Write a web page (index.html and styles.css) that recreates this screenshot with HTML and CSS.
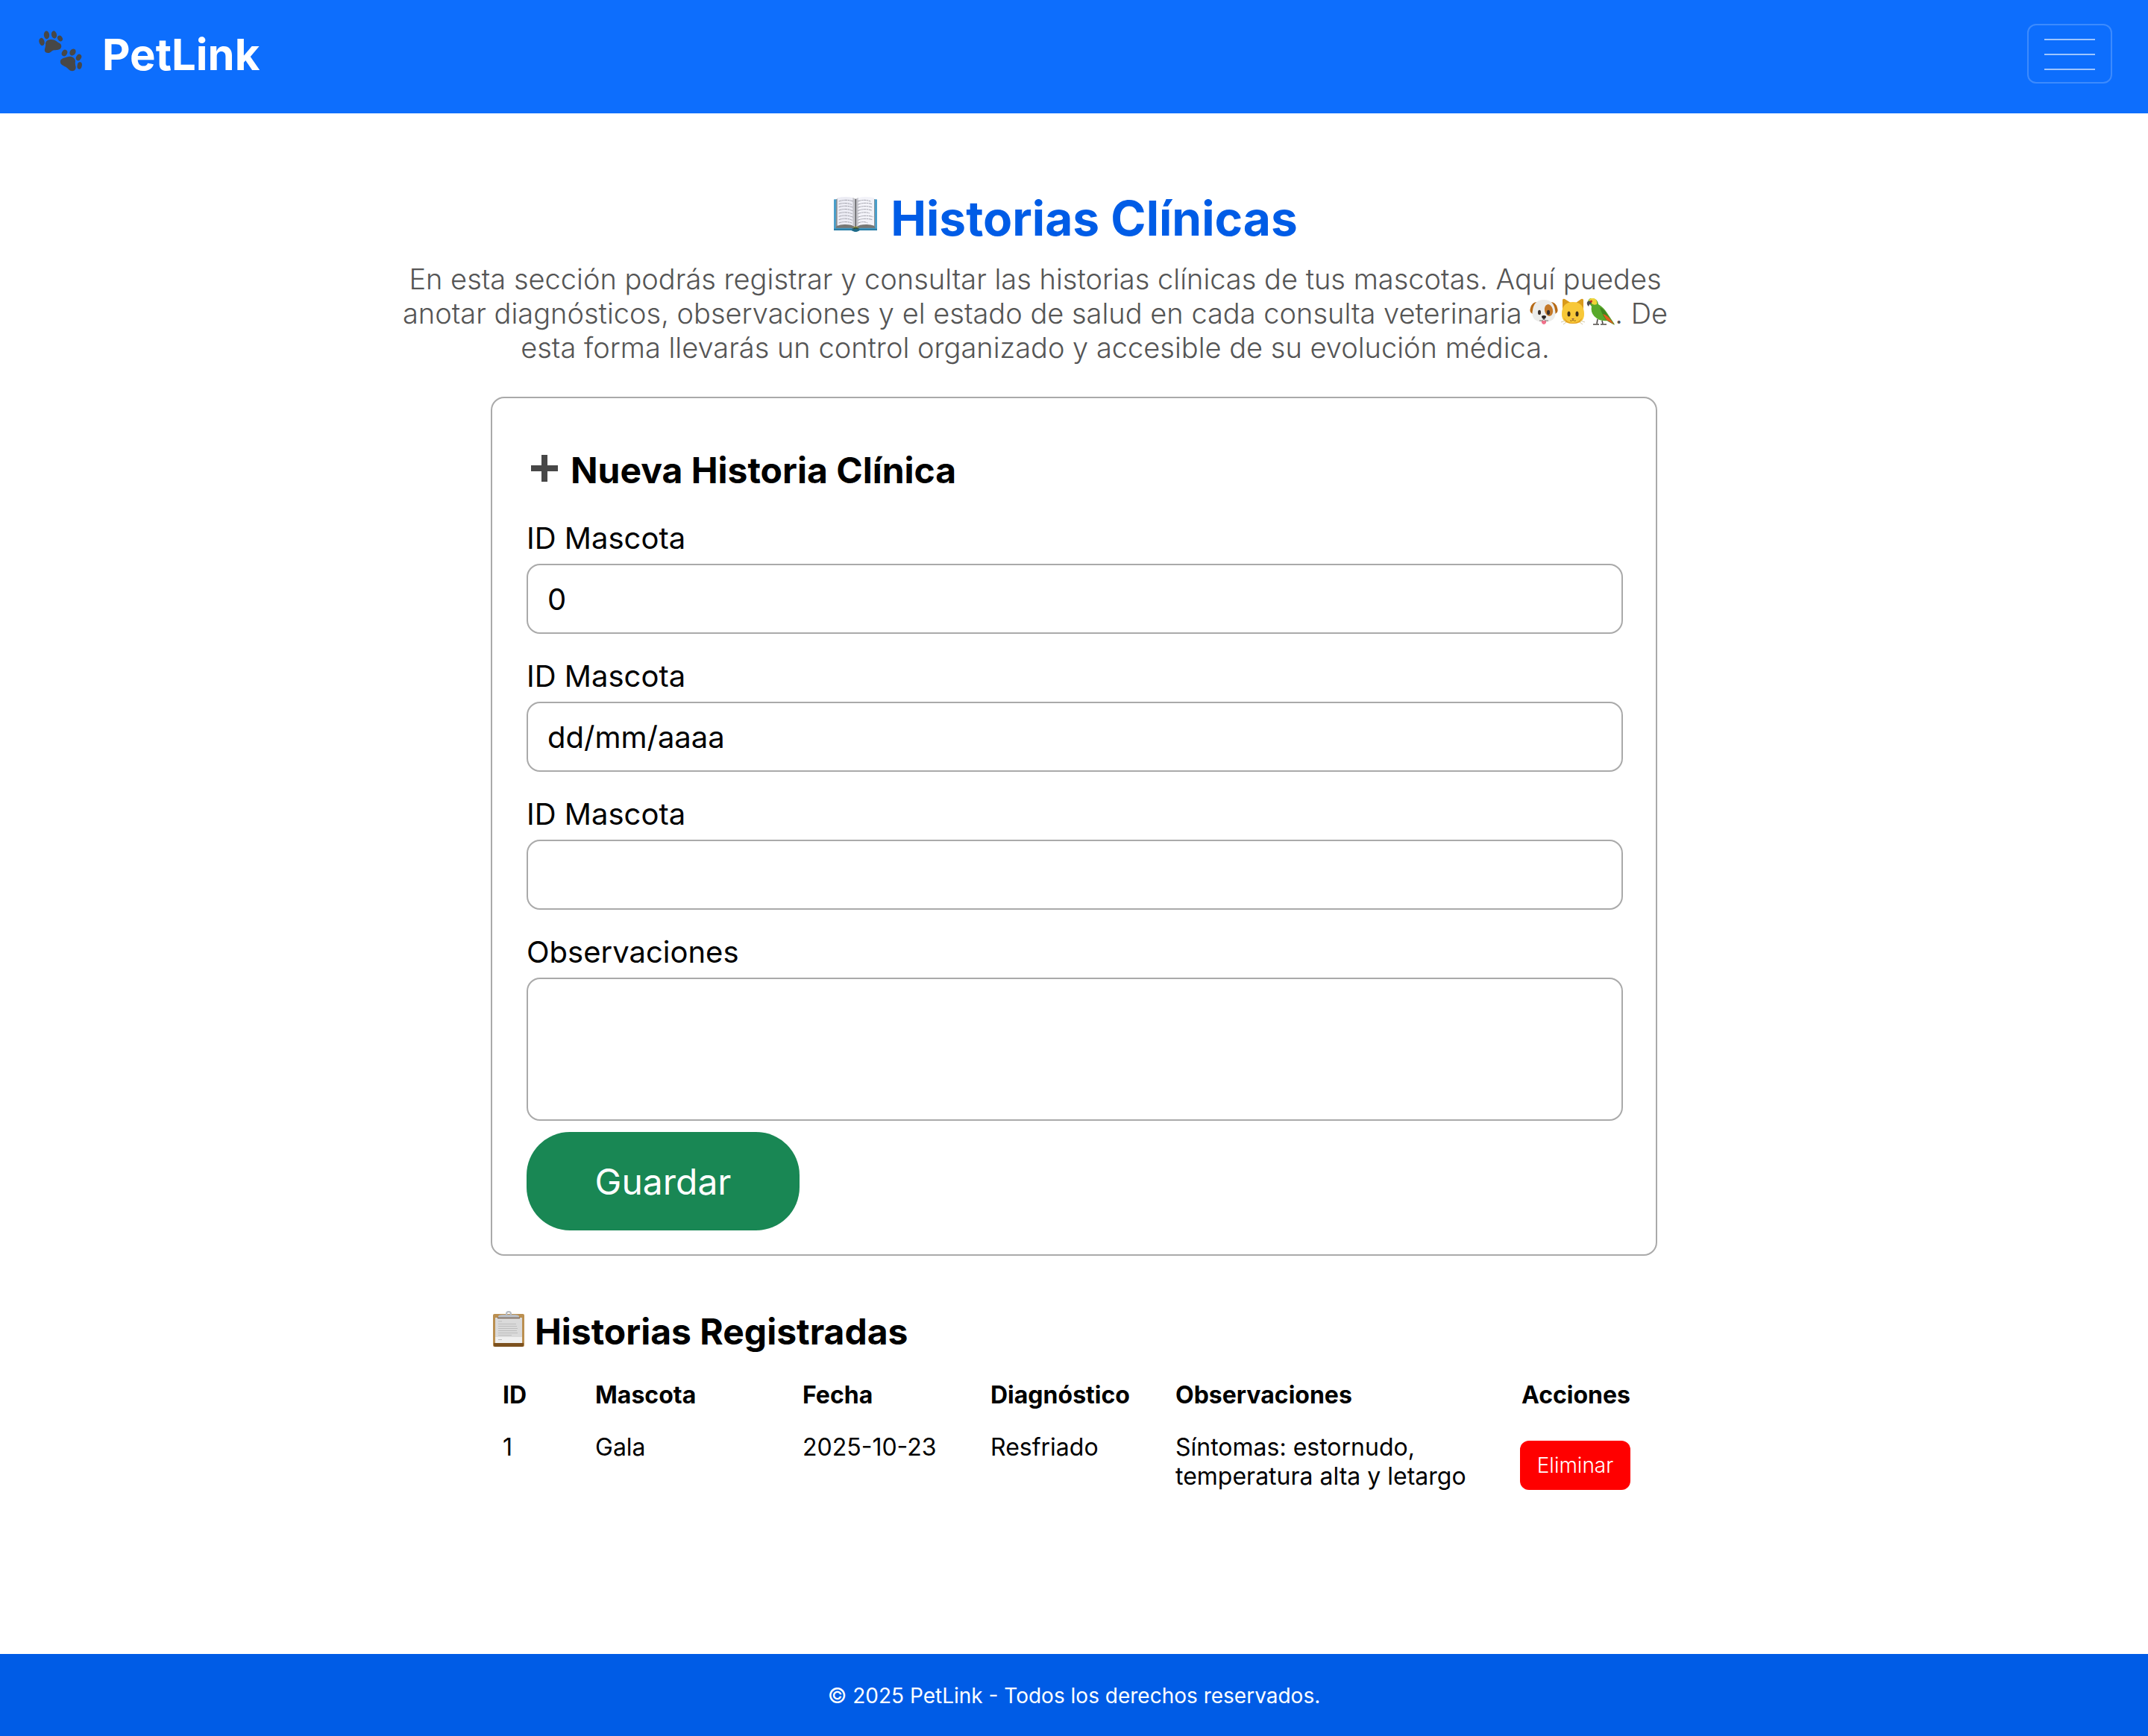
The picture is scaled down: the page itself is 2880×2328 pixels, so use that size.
FILE: index.html
```html
<!DOCTYPE html>
<html lang="es">
<head>
<meta charset="utf-8">
<meta name="viewport" content="width=device-width, initial-scale=1">
<title>PetLink - Historias Clínicas</title>
<link rel="stylesheet" href="styles.css">
</head>
<body>
<header class="navbar">
  <a class="brand" href="#">
    <svg class="brand-icon" viewBox="0 0 58 55" aria-hidden="true">
      <g fill="#474747">
        <ellipse cx="4" cy="15" rx="3.6" ry="5.2" transform="rotate(-14 4 15)"/>
        <ellipse cx="10.500" cy="6" rx="3.700" ry="5.400" transform="rotate(-5 10.500 6)"/>
        <ellipse cx="20.500" cy="5.500" rx="3.500" ry="5.200" transform="rotate(-12 20.500 5.500)"/>
        <ellipse cx="28.500" cy="10.500" rx="3.100" ry="4.200" transform="rotate(-32 28.500 10.500)"/>
        <path d="M9 17C10 13 13 12 17 12C22 12 24 15 28 17C31 19 31 23 28 25C24 27 20 25 17 28C15 30 12 31 9 29C6 26 10 22 9 17Z"/>
        <ellipse cx="34.500" cy="30" rx="3.500" ry="4.500" transform="rotate(28 34.500 30)"/>
        <ellipse cx="45.500" cy="29" rx="3.800" ry="4.800" transform="rotate(35 45.500 29)"/>
        <ellipse cx="53.500" cy="36" rx="3.400" ry="4.600" transform="rotate(28 53.500 36)"/>
        <ellipse cx="54.700" cy="47" rx="3.100" ry="4.700" transform="rotate(10 54.700 47)"/>
        <path d="M31 38C34 36 37 36 40 35C44 34 49 37 49 41C48 46 51 49 49 52C47 55 43 55 40 52C37 48 33 48 30 45C28 42 29 39 31 38Z"/>
      </g>
    </svg>
    <span>PetLink</span>
  </a>
  <button class="menu-toggle" type="button" aria-label="Abrir menú">
    <span class="menu-line"></span>
    <span class="menu-line"></span>
    <span class="menu-line"></span>
  </button>
</header>

<main class="page">
  <section class="intro">
    <h1 class="intro-title">
      <svg class="book-icon" viewBox="0 0 174 141" aria-hidden="true">
        <path d="M2 10H172Q174 10 174 12V134H104Q88 144 70 134H0V12Q0 10 2 10Z" fill="#4a9fcb"/>
        <path d="M0 128H174V135H104Q88 145 70 135H0Z" fill="#2a7ea6"/>
        <path d="M10 10L16 6V112L8 125Z" fill="#8b8d8f"/>
        <path d="M164 10L158 6V112L166 125Z" fill="#8b8d8f"/>
        <path d="M16 111H158L167 125H104Q88 134 70 125H7Z" fill="#777774"/>
        <path d="M14 4Q28 0 50 0Q76 0 87 8V121Q70 110 42 111Q26 111 14 116Z" fill="#ececf4"/>
        <path d="M162 4Q148 0 126 0Q100 0 89 8V121Q104 110 134 111Q148 111 162 116Z" fill="#f3f3f9"/>
        <path d="M76 3Q84 5 88 10Q92 5 98 3V114L88 124L76 114Z" fill="#c4c4ca"/>
        <path d="M88 8V122" stroke="#56565a" stroke-width="4"/>
        <g fill="none" stroke="#a0a0aa" stroke-width="3" stroke-dasharray="12 2 7 2">
          <path d="M20 18Q48 8 78 18M20 29Q48 21 72 31M20 41Q48 32 76 42M20 54Q48 44 76 56M20 66Q48 58 74 68M20 79Q48 70 78 82M20 92Q48 82 74 94M20 105Q46 96 72 105"/>
          <path d="M96 18Q122 8 148 18M96 31Q124 20 154 29M96 43Q124 33 154 42M96 56Q122 45 152 54M96 68Q122 58 144 66M96 82Q124 71 158 80M96 94Q122 83 156 92M96 106Q118 96 136 105"/>
        </g>
        <ellipse cx="88" cy="131" rx="15" ry="9" fill="#1f6a86"/>
        <path d="M74 126Q88 112 102 126Q88 120 74 126Z" fill="#a8901c"/>
        <path d="M79 129Q88 122 97 129" fill="none" stroke="#454318" stroke-width="3"/>
      </svg>
      <span>Historias Clínicas</span>
    </h1>
    <p class="intro-text">En esta sección podrás registrar y consultar las historias clínicas de tus mascotas. Aquí puedes anotar diagnósticos, observaciones y el estado de salud en cada consulta veterinaria <svg class="pet-icon" viewBox="0 0 38 38" role="img" aria-label="Perro">
        <path d="M10 5Q3 5 1 13Q-1 19 4 21Q8 20 10 12ZM28 5Q35 5 37 13Q39 19 34 21Q30 20 28 12Z" fill="#b66a16"/>
        <path d="M19 2C29 2 33 8 34 16C36 25 32 32 19 32C6 32 2 25 4 16C5 8 9 2 19 2Z" fill="#ececea"/>
        <ellipse cx="25.500" cy="16" rx="5.500" ry="8" fill="#c4792a" transform="rotate(-12 25.500 16)"/>
        <ellipse cx="13" cy="19" rx="2" ry="3.200" fill="#3a302c"/>
        <ellipse cx="25" cy="19" rx="2" ry="3.200" fill="#3a302c"/>
        <path d="M16 30H22V33Q19 37 16 33Z" fill="#f0718b"/>
        <path d="M16 24Q19 22 22 24Q22 27 19 28Q16 27 16 24Z" fill="#2c2626"/>
        <path d="M13 30Q17 31 19 28Q21 31 25 30" fill="none" stroke="#77716c" stroke-width="1"/>
      </svg><svg class="pet-icon" viewBox="0 0 38 38" role="img" aria-label="Gato">
        <path d="M6 15L6 2Q7 0 9 1L17 6H24L31 1Q33 0 34 2L34 15Z" fill="#d99a1c"/>
        <path d="M20 5C31 5 35 12 35 21C35 30 30 34 20 34C10 34 5 30 5 21C5 12 9 5 20 5Z" fill="#f8c838"/>
        <path d="M8 26Q12 33 20 33Q28 33 32 26Q31 34 20 34Q9 34 8 26Z" fill="#e29b1e"/>
        <ellipse cx="14.500" cy="21" rx="2" ry="3.500" fill="#3b2c17"/>
        <ellipse cx="25.500" cy="21" rx="2" ry="3.500" fill="#3b2c17"/>
        <path d="M18 27H22L20 29Z" fill="#8b5a50"/>
        <path d="M20 29Q19 31 16 30M20 29Q21 31 24 30" fill="none" stroke="#a06b18"/>
        <path d="M10 30L4 32M11 32L7 35M30 30L36 32M29 32L33 35" stroke="#d5c9a6"/>
      </svg><svg class="pet-icon" viewBox="0 0 38 38" role="img" aria-label="Loro">
        <path d="M2 5Q3-1 9 0Q15 1 16 8Q23 12 28 20Q34 29 38 35L29 30Q20 31 14 27Q5 21 7 11Z" fill="#59a92b"/>
        <path d="M3 3Q5-1 10 0Q15 2 14 8Q9 10 6 6Z" fill="#f0d338"/>
        <path d="M18 12Q25 15 28 22L38 36L29 31Q22 26 18 12Z" fill="#3f861f"/>
        <path d="M22 21Q29 22 37 35L27 29Z" fill="#e35c1e"/>
        <path d="M2 4Q7 2 7 7Q4 7 3 11Q-1 7 2 4Z" fill="#4d4b50"/>
        <circle cx="6.500" cy="4" r="1.500" fill="#c62f26"/>
        <path d="M15 28L14 34M21 30L22 34M9 35H17M19 35H27" fill="none" stroke="#4d4945" stroke-width="1.600"/>
      </svg>. De esta forma llevarás un control organizado y accesible de su evolución médica.</p>
  </section>

  <form class="card">
    <h2 class="card-title">
      <svg class="plus-icon" viewBox="0 0 36 36" aria-hidden="true"><path d="M14 0H22V14H36V22H22V36H14V22H0V14H14Z" fill="#474747"/></svg>
      <span>Nueva Historia Clínica</span>
    </h2>
    <div class="field">
      <label for="mascota">ID Mascota</label>
      <input id="mascota" type="text" value="0">
    </div>
    <div class="field">
      <label for="fecha">ID Mascota</label>
      <input id="fecha" type="text" value="dd/mm/aaaa">
    </div>
    <div class="field">
      <label for="diagnostico">ID Mascota</label>
      <input id="diagnostico" type="text">
    </div>
    <div class="field">
      <label for="observaciones">Observaciones</label>
      <textarea id="observaciones"></textarea>
    </div>
    <button class="save" type="button">Guardar</button>
  </form>

  <section class="records">
    <h2 class="records-title">
      <svg class="clipboard-icon" viewBox="0 0 42 48" aria-hidden="true">
        <rect x="0" y="4" width="42" height="44" rx="2" fill="#bb8f50"/>
        <path d="M1 43H41V46Q41 48 39 48H3Q1 48 1 46Z" fill="#7c511f"/>
        <rect x="3" y="9" width="36" height="34" fill="#dadada"/>
        <path d="M3 35H39V43H3Z" fill="#f0f0f0"/>
        <path d="M7 14H12M7 17.500H31M7 20.500H32M7 23.500H33M7 26.500H32M7 29.500H33M7 32.500H25M7 38.500H12" stroke="#bdbdbd"/>
        <circle cx="21" cy="4" r="3" fill="none" stroke="#b5bac2" stroke-width="2"/>
        <path d="M7 9V7Q8 5 12 5H30Q34 5 35 7V9Z" fill="#b9bdc3"/>
        <path d="M6 9.500H36" stroke="#796454" stroke-width="1.500"/>
      </svg>
      <span>Historias Registradas</span>
    </h2>
    <table class="records-table">
      <colgroup>
        <col class="col-id"><col class="col-pet"><col class="col-date"><col class="col-diagnosis"><col class="col-notes"><col class="col-actions">
      </colgroup>
      <thead>
        <tr><th>ID</th><th>Mascota</th><th>Fecha</th><th>Diagnóstico</th><th>Observaciones</th><th class="actions-head">Acciones</th></tr>
      </thead>
      <tbody>
        <tr>
          <td>1</td><td>Gala</td><td>2025-10-23</td><td>Resfriado</td>
          <td>Síntomas: estornudo, temperatura alta y letargo</td>
          <td><button class="delete" type="button">Eliminar</button></td>
        </tr>
      </tbody>
    </table>
  </section>
</main>

<footer class="footer">© 2025 PetLink - Todos los derechos reservados.</footer>
</body>
</html>
```
FILE: styles.css
```css
* {
  box-sizing: border-box;
}

body {
  margin: 0;
  min-height: 100vh;
  display: flex;
  flex-direction: column;
  background: #fff;
  color: #000;
  font-family: Inter, "Liberation Sans", sans-serif;
}

button,
input,
textarea {
  font: inherit;
}

h1,
h2,
p {
  margin: 0;
}

.navbar {
  display: flex;
  justify-content: space-between;
  align-items: flex-start;
  padding: 32px 48px 40px 52px;
  background: #0d6efd;
}

.brand {
  display: flex;
  align-items: center;
  gap: 27px;
  padding-top: 3px;
  color: #fff;
  font-size: 58px;
  font-weight: 700;
  line-height: 76px;
  text-decoration: none;
}

.brand-icon {
  width: 58px;
  height: 55px;
  margin-bottom: 10px;
}

.menu-toggle {
  display: flex;
  flex-direction: column;
  align-items: center;
  gap: 18px;
  width: 114px;
  height: 80px;
  padding: 18px 0 16px;
  border: 2px solid rgba(255, 255, 255, 0.2);
  border-radius: 12px;
  background: none;
}

.menu-line {
  flex: none;
  width: 68px;
  height: 2px;
  background: rgba(255, 255, 255, 0.6);
}

.page {
  flex: 1;
  display: flex;
  flex-direction: column;
  align-items: center;
  padding: 102px 48px 0;
}

.intro {
  display: flex;
  flex-direction: column;
  align-items: center;
  gap: 20px;
}

.intro-title {
  display: flex;
  align-items: center;
  gap: 18px;
  padding-right: 22px;
  color: #005ce6;
  font-size: 64px;
  line-height: 77px;
}

.book-icon {
  width: 58px;
  height: 47px;
  margin-bottom: 10px;
}

.intro-text {
  max-width: 1824px;
  padding-right: 104px;
  color: #555;
  font-size: 38px;
  font-weight: 300;
  line-height: 46px;
  text-align: center;
}

.pet-icon {
  width: 38px;
  height: 38px;
  vertical-align: -4px;
}

.card {
  width: 100%;
  max-width: 1564px;
  margin-top: 43px;
  padding: 68px 44px 32px 46px;
  border: 2px solid #aaa;
  border-radius: 18px;
}

.card-title,
.records-title {
  display: flex;
  align-items: center;
  font-size: 48px;
  line-height: 58px;
}

.card-title {
  gap: 17px;
  padding-left: 6px;
  margin-bottom: 38px;
}

.plus-icon {
  width: 36px;
  height: 36px;
  margin-bottom: 6px;
}

.field {
  display: flex;
  flex-direction: column;
  gap: 10px;
  margin-bottom: 33px;
  font-size: 40px;
  line-height: 48px;
}

.field input,
.field textarea {
  width: 100%;
  height: 94px;
  padding: 0 26px;
  border: 2px solid #aaa;
  border-radius: 18px;
  background: #fff;
  color: #000;
}

.field textarea {
  height: 192px;
  padding: 22px 26px;
  resize: none;
}

.field:last-of-type {
  margin-bottom: 15px;
}

.save {
  display: block;
  width: 366px;
  height: 132px;
  border: 0;
  border-radius: 58px;
  background: #198754;
  color: #fff;
  font-size: 48px;
  font-weight: 400;
}

.records {
  width: 100%;
  max-width: 1564px;
  margin-top: 73px;
}

.records-title {
  gap: 14px;
  padding-left: 3px;
}

.clipboard-icon {
  width: 42px;
  height: 48px;
  margin-bottom: 8px;
}

.records-table {
  width: 100%;
  margin-top: 36px;
  border-collapse: collapse;
  table-layout: fixed;
  font-size: 32px;
  line-height: 39px;
  text-align: left;
}

.records-table th,
.records-table td {
  padding: 0 0 31px;
  vertical-align: top;
}

.records-table th:first-child,
.records-table td:first-child {
  padding-left: 16px;
}

.records-table .actions-head {
  padding-left: 2px;
}

.col-id {
  width: 140px;
}

.col-pet {
  width: 278px;
}

.col-date {
  width: 252px;
}

.col-diagnosis {
  width: 248px;
}

.col-notes {
  width: 462px;
}

.delete {
  display: block;
  width: 148px;
  height: 66px;
  margin-top: 11px;
  border: 0;
  border-radius: 12px;
  background: #f00;
  color: #fff;
  font-size: 28px;
  font-weight: 300;
}

.footer {
  padding: 39px 48px 37px;
  background: #005ce6;
  color: #fff;
  font-size: 28px;
  line-height: 34px;
  text-align: center;
}
```
